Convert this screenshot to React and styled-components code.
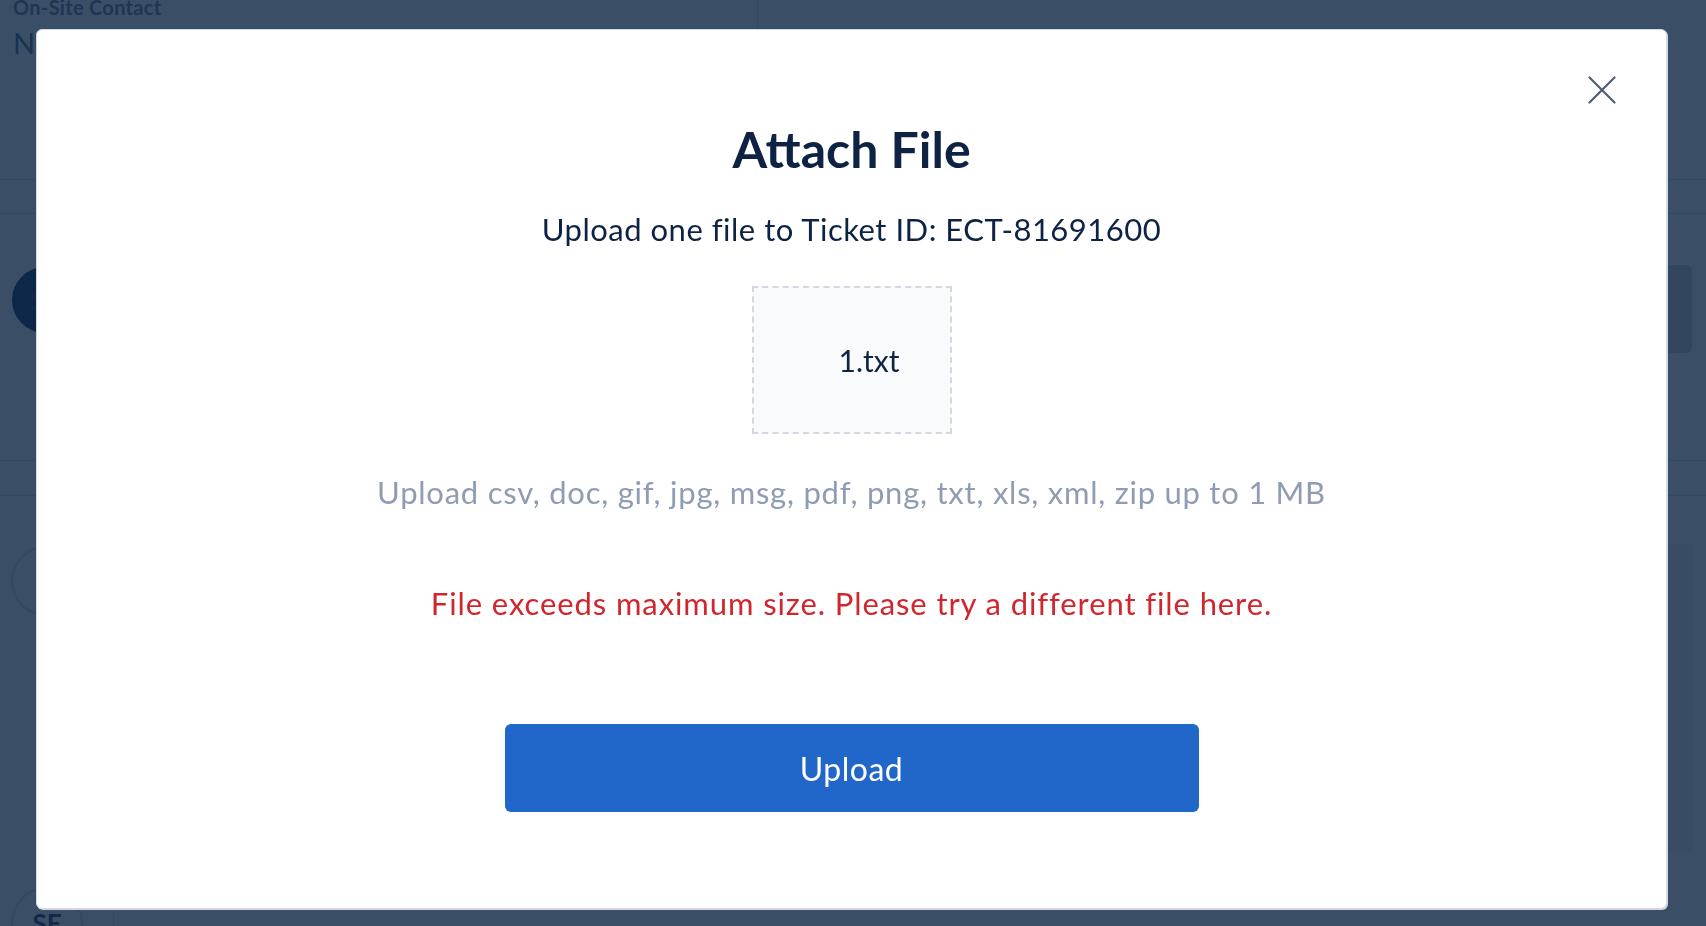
import React from "react";
import styled, { createGlobalStyle } from "styled-components";

const GlobalStyle = createGlobalStyle`
  html, body {
    margin: 0;
    padding: 0;
    background: #3a4f66;
    font-family: "Lato", "Open Sans", sans-serif;
    overflow: hidden;
  }
  * { box-sizing: border-box; }
`;

/* ---------- Background page (dimmed behind the modal) ---------- */

const Page = styled.div`
  width: 1706px;
  height: 926px;
  background: #3a4f66;
  overflow: hidden;
`;

const TopSection = styled.div`
  display: flex;
  height: 180px;
  border-bottom: 1px solid #34485e;
`;

const InfoColumn = styled.div`
  width: 758px;
  padding: 0 13px;
  border-right: 1px solid #34485f;
`;

const InfoLabel = styled.div`
  margin-top: -4px;
  font-size: 20px;
  line-height: 22px;
  font-weight: 700;
  letter-spacing: 0.3px;
  color: #1f3553;
`;

const InfoValue = styled.div`
  margin-top: 8px;
  font-size: 29px;
  line-height: 34px;
  color: #1c3251;
`;

const Band = styled.div`
  height: ${(p) => p.$h}px;
  border-bottom: 1px solid #33475d;
`;

const MiddleSection = styled.div`
  height: 247px;
  display: flex;
  align-items: flex-start;
  justify-content: space-between;
  padding: 53px 14px 0 12px;
  border-bottom: 1px solid #33475d;
`;

const Avatar = styled.div`
  width: ${(p) => p.$size}px;
  height: ${(p) => p.$size}px;
  border-radius: 50%;
  flex-shrink: 0;
  display: flex;
  align-items: center;
  justify-content: center;
  font-weight: 700;
  font-size: 26px;
  color: #14294a;
  background: ${(p) => (p.$filled ? "#0c2747" : "transparent")};
  border: ${(p) => (p.$filled ? "none" : "2px solid #34485e")};
`;

const SideButton = styled.div`
  margin-top: -2px;
  width: 120px;
  height: 88px;
  border-radius: 6px;
  background: #32465d;
`;

const LowerSection = styled.div`
  display: flex;
  justify-content: space-between;
  align-items: flex-start;
  padding: 50px 13px 0 11px;
  height: 391px;
`;

const ActivityPanel = styled.div`
  width: 900px;
  height: 309px;
  margin-top: -3px;
  background: #384c63;
`;

const BottomRow = styled.div`
  display: flex;
  padding-left: 11px;
`;

const Divider = styled.div`
  width: 1px;
  margin-left: 30px;
  background: #34485e;
  height: 40px;
`;

/* ---------- Modal ---------- */

const Modal = styled.div`
  position: fixed;
  top: 29px;
  left: 36px;
  width: 1631px;
  height: 880px;
  background: #ffffff;
  border: 1px solid #d3d7e1;
  box-shadow: 1px 1px 0 #d3d7e1;
  border-radius: 6px;
  display: flex;
  flex-direction: column;
  align-items: center;
  padding-top: 89px;
`;

const CloseButton = styled.button`
  position: absolute;
  top: 40px;
  right: 44px;
  width: 40px;
  height: 40px;
  border: none;
  background: transparent;
  padding: 0;
  display: flex;
  align-items: center;
  justify-content: center;
  cursor: pointer;
`;

const Title = styled.h1`
  margin: 0;
  font-size: 50px;
  line-height: 60px;
  font-weight: 700;
  color: #0e2343;
`;

const Subtitle = styled.p`
  margin: 31px 0 0;
  font-size: 31px;
  line-height: 38px;
  letter-spacing: 0.5px;
  color: #0e2343;
`;

const DropZone = styled.div`
  margin-top: 38px;
  width: 200px;
  height: 148px;
  border: 2px dashed #d3d7e0;
  background: #f9fafb;
  display: flex;
  align-items: center;
  justify-content: center;
  padding-left: 35px;
  font-size: 30px;
  color: #0e2343;
`;

const Hint = styled.p`
  margin: 39px 0 0;
  font-size: 31px;
  line-height: 38px;
  letter-spacing: 0.75px;
  color: #8f9cb2;
`;

const ErrorText = styled.p`
  margin: 73px 0 0;
  font-size: 31px;
  line-height: 38px;
  letter-spacing: 0.9px;
  color: #d0262d;
`;

const UploadButton = styled.button`
  margin-top: 102px;
  width: 694px;
  height: 88px;
  border: none;
  border-radius: 6px;
  background: #2166c9;
  color: #ffffff;
  font-family: inherit;
  font-size: 32px;
  letter-spacing: 0.5px;
  cursor: pointer;
`;

const CloseIcon = () => (
  <svg width="28" height="28" viewBox="0 0 28 28" fill="none">
    <path
      d="M1.5 1.5 L26.5 26.5 M26.5 1.5 L1.5 26.5"
      stroke="#4d5e78"
      strokeWidth="2.2"
      strokeLinecap="round"
    />
  </svg>
);

export default function App() {
  return (
    <>
      <GlobalStyle />
      <Page>
        <TopSection>
          <InfoColumn>
            <InfoLabel>On-Site Contact</InfoLabel>
            <InfoValue>None</InfoValue>
          </InfoColumn>
        </TopSection>
        <Band $h={34} />
        <MiddleSection>
          <Avatar $size={66} $filled>
            SE
          </Avatar>
          <SideButton />
        </MiddleSection>
        <Band $h={35} />
        <LowerSection>
          <Avatar $size={70}>S</Avatar>
          <ActivityPanel />
        </LowerSection>
        <BottomRow>
          <Avatar $size={72}>SE</Avatar>
          <Divider />
        </BottomRow>
      </Page>

      <Modal role="dialog" aria-label="Attach File">
        <CloseButton aria-label="Close">
          <CloseIcon />
        </CloseButton>
        <Title>Attach File</Title>
        <Subtitle>Upload one file to Ticket ID: ECT-81691600</Subtitle>
        <DropZone>1.txt</DropZone>
        <Hint>
          Upload csv, doc, gif, jpg, msg, pdf, png, txt, xls, xml, zip up to 1 MB
        </Hint>
        <ErrorText>
          File exceeds maximum size. Please try a different file here.
        </ErrorText>
        <UploadButton>Upload</UploadButton>
      </Modal>
    </>
  );
}
